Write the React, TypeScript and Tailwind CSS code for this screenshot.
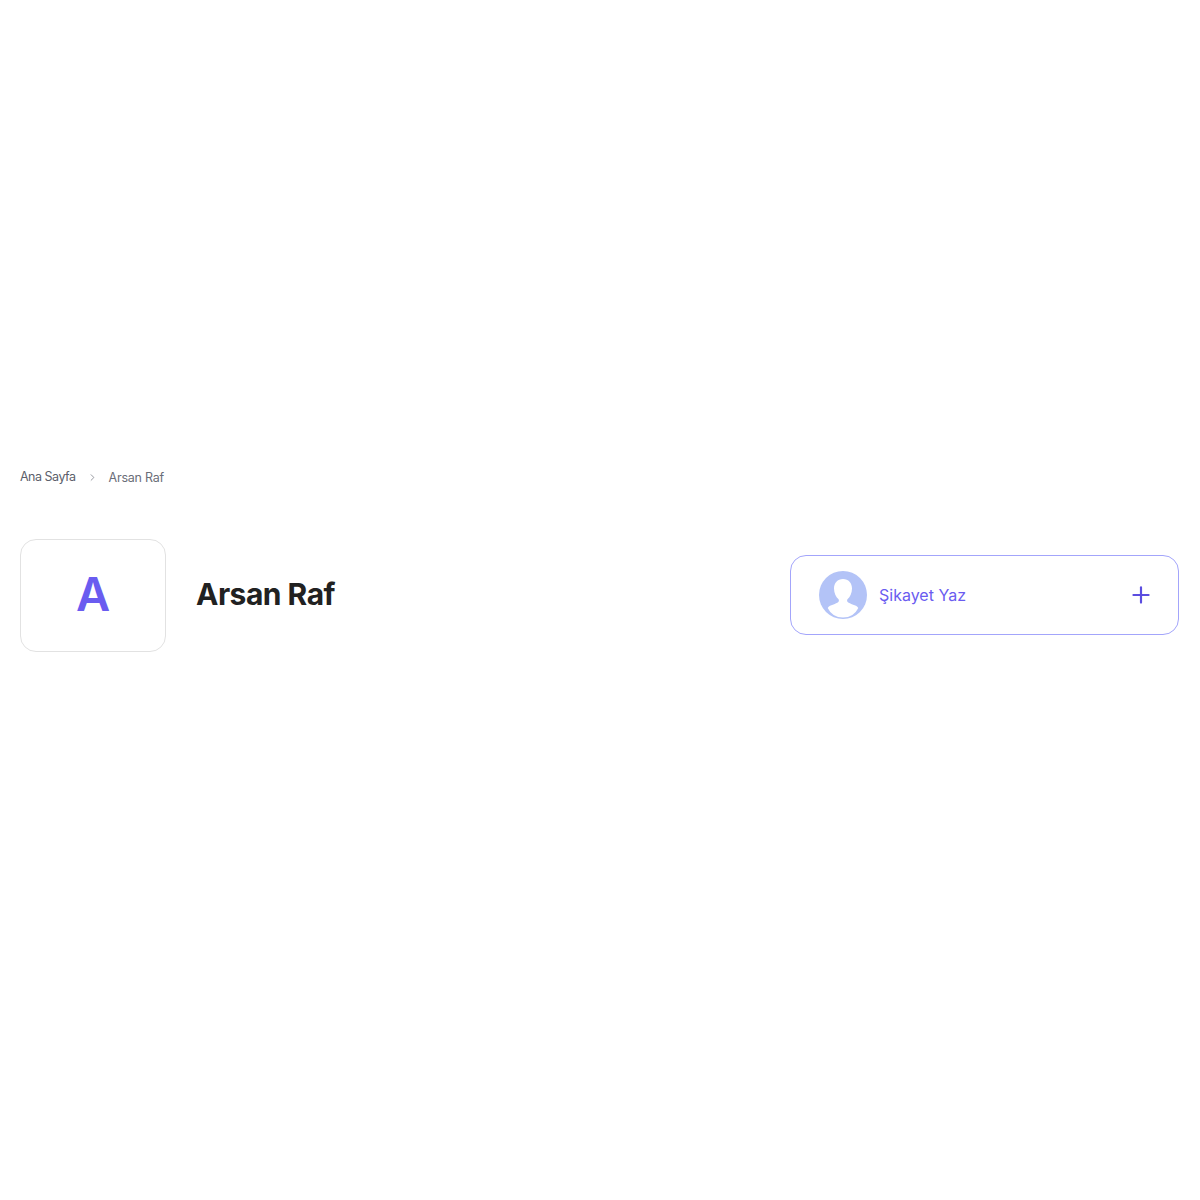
import { ChevronRight, Plus } from "lucide-react";

const font = "font-['Inter','Liberation_Sans',sans-serif]";

function UserAvatar() {
  return (
    <svg width="48" height="48" viewBox="0 0 48 48" className="shrink-0">
      <circle cx="24" cy="24" r="24" fill="#b3c3f7" />
      <path
        d="M24 8c-5.500 0-9 4-9 9.500 0 4.500 2 8.500 4.300 10.600 1 1 .8 2.600-.5 3.300-2 1.100-5 2.200-7.800 3.400-1 .5-1.800 1.200-2.300 2.200A17 17 0 0 0 39.300 37c-.5-1-1.300-1.700-2.300-2.200-2.800-1.200-5.800-2.300-7.800-3.400-1.300-.7-1.500-2.300-.5-3.300 2.300-2.100 4.300-6.100 4.300-10.600C33 12 29.500 8 24 8z"
        fill="#ffffff"
      />
    </svg>
  );
}

export default function App() {
  return (
    <div className={`${font} min-h-[1200px] bg-white px-5 pt-[468px]`}>
      <nav className="flex h-[18px] items-center text-[12.500px] tracking-[-0.5px] text-[#5c5f6b]">
        <span>Ana Sayfa</span>
        <ChevronRight className="mx-[11px] h-[11px] w-[11px] text-[#6b6e78]" strokeWidth={1.5} />
        <span className="mt-0.5 tracking-[-0.25px] text-[#6b6e78]">Arsan Raf</span>
      </nav>

      <div className="mt-[53px] flex items-start justify-between pr-px">
        <div className="flex h-[113px] items-center gap-[30px]">
          <div className="flex h-[113px] w-[146px] items-center justify-center rounded-[16px] border border-[#e2e2e2] bg-white">
            <span className="mb-1 text-[47px] leading-none font-semibold text-[#6a5cf0]">A</span>
          </div>
          <h1 className="mb-1 text-[30px] leading-none font-bold tracking-[-0.5px] text-[#212121]">Arsan Raf</h1>
        </div>

        <button className="mt-4 flex h-20 w-[389px] items-center rounded-[16px] border border-[#a3a5fb] bg-white pr-[24px] pl-[28px]">
          <UserAvatar />
          <span className="mb-px ml-3 text-[16px] text-[#6a5cf0]">Şikayet Yaz</span>
          <Plus className="ml-auto h-[26px] w-[26px] text-[#5b4de0]" strokeWidth={2} />
        </button>
      </div>
    </div>
  );
}
